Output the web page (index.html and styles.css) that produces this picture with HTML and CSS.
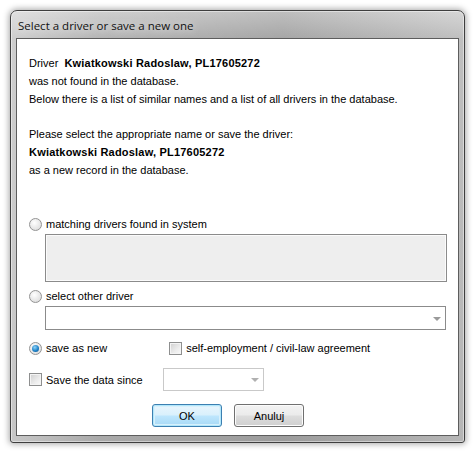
FILE: index.html
```html
<!DOCTYPE html>
<html>
<head>
<meta charset="utf-8">
<link rel="stylesheet" href="styles.css">
</head>
<body>
<div class="window">
  <div class="titlebar">Select a driver or save a new one</div>
  <div class="client">
    <div class="msg">
      <div class="line">Driver&nbsp; <b>Kwiatkowski Radoslaw, PL17605272</b></div>
      <div class="line">was not found in the database.</div>
      <div class="line">Below there is a list of similar names and a list of all drivers in the database.</div>
    </div>
    <div class="msg second">
      <div class="line">Please select the appropriate name or save the driver:</div>
      <div class="line"><b>Kwiatkowski Radoslaw, PL17605272</b></div>
      <div class="line">as a new record in the database.</div>
    </div>

    <div class="row r-matching"><span class="radio"></span><span class="label">matching drivers found in system</span></div>
    <div class="listbox"></div>

    <div class="row r-other"><span class="radio"></span><span class="label">select other driver</span></div>
    <div class="combo"><span class="arrow"></span></div>

    <div class="row r-new">
      <span class="radio checked"></span><span class="label">save as new</span>
      <span class="check self"></span><span class="label">self-employment / civil-law agreement</span>
    </div>

    <div class="row r-since">
      <span class="check"></span><span class="label">Save the data since</span>
      <div class="combo small"><span class="arrow"></span></div>
    </div>

    <div class="buttons">
      <div class="btn default">OK</div>
      <div class="btn">Anuluj</div>
    </div>
  </div>
</div>
</body>
</html>
```
FILE: styles.css
```css
html, body {
  margin: 0;
  padding: 0;
  background: #ffffff;
}
body {
  width: 476px;
  height: 453px;
  overflow: hidden;
  font-family: "Liberation Sans", Arial, sans-serif;
  font-size: 11px;
  color: #000;
}
b {
  letter-spacing: 0.2px;
}
.window {
  box-sizing: border-box;
  margin: 10px 0 0 10px;
  width: 455px;
  height: 433px;
  border: 1px solid #3e3e3e;
  border-radius: 7px 7px 3px 3px;
  background:
    linear-gradient(90deg, rgba(255,255,255,0.35) 0%, rgba(255,255,255,0) 20%, rgba(0,0,0,0.08) 60%, rgba(255,255,255,0.15) 100%),
    linear-gradient(180deg, #cfcfcf 0px, #b4b4b4 28px, #a9a9a9 100%);
  box-shadow: 0 0 6px 1px rgba(0,0,0,0.35), inset 0 0 0 1px rgba(255,255,255,0.45);
  padding: 0 5px 6px 5px;
  display: flex;
  flex-direction: column;
}
.titlebar {
  height: 27px;
  line-height: 29px;
  padding-left: 2px;
  font-family: "Open Sans", "Noto Sans", sans-serif;
  font-size: 11.5px;
  color: #111;
  text-shadow: 0 0 8px rgba(255,255,255,0.9);
}
.client {
  flex: 1;
  background: #fff;
  border: 1px solid #5d5d5d;
  padding: 15px 10px 0 12px;
  display: flex;
  flex-direction: column;
}
.msg .line {
  height: 18px;
  line-height: 18px;
  white-space: nowrap;
}
.msg.second {
  margin-top: 17px;
}
.row {
  display: flex;
  align-items: center;
  height: 18px;
}
.r-matching { margin-top: 36px; }
.r-other { margin-top: 5px; }
.r-new { margin-top: 9px; }
.r-since { margin-top: 11px; height: 23px; }
.label {
  white-space: nowrap;
}
.radio {
  box-sizing: border-box;
  width: 13px;
  height: 13px;
  border-radius: 50%;
  border: 1px solid #939393;
  background: radial-gradient(circle at 40% 35%, #ffffff 0%, #ececec 45%, #d6d6d6 100%);
  margin-right: 4px;
  flex: none;
  position: relative;
}
.radio.checked::after {
  content: "";
  position: absolute;
  left: 2px;
  top: 2px;
  width: 7px;
  height: 7px;
  border-radius: 50%;
  background: radial-gradient(circle at 40% 35%, #8fd3f7 0%, #1f82c8 55%, #0b4f86 100%);
}
.check {
  box-sizing: border-box;
  width: 13px;
  height: 13px;
  border: 1px solid #8e8f8f;
  background: linear-gradient(135deg, #cfcfcf 0%, #ececec 60%, #fafafa 100%);
  box-shadow: inset 0 0 0 1px #f4f4f4;
  margin-right: 4px;
  flex: none;
}
.check.self {
  margin-left: 62px;
}
.listbox {
  box-sizing: border-box;
  margin-top: 1px;
  margin-left: 16px;
  width: 402px;
  height: 48px;
  background: #eeeeee;
  border: 1px solid #8b8b8b;
  box-shadow: inset 0 0 0 1px #fbfbfb;
}
.combo {
  box-sizing: border-box;
  margin-top: 1px;
  margin-left: 16px;
  width: 401px;
  height: 24px;
  background: #fff;
  border: 1px solid #8b8b8b;
  position: relative;
}
.combo.small {
  margin: 0 0 0 20px;
  width: 101px;
  height: 23px;
  border-color: #c9c9c9;
}
.arrow {
  position: absolute;
  right: 4px;
  top: 10px;
  width: 0;
  height: 0;
  border-left: 4px solid transparent;
  border-right: 4px solid transparent;
  border-top: 4px solid #9a9a9a;
}
.combo.small .arrow {
  top: 9px;
  right: 4px;
  border-top-color: #b0b0b0;
}
.buttons {
  display: flex;
  gap: 12px;
  margin-top: 13px;
  margin-left: 123px;
}
.btn {
  box-sizing: border-box;
  width: 70px;
  height: 23px;
  border: 1px solid #707070;
  border-radius: 3px;
  background: linear-gradient(180deg, #f3f3f3 0%, #ebebeb 48%, #dddddd 52%, #cfcfcf 100%);
  box-shadow: inset 0 0 0 1px #fcfcfc;
  display: flex;
  align-items: center;
  justify-content: center;
  font-size: 11px;
}
.btn.default {
  border-color: #3c7fb1;
  background: linear-gradient(180deg, #eaf6fd 0%, #d9f0fc 48%, #bee6fd 52%, #a7d9f5 100%);
  box-shadow: inset 0 0 0 1px #48d0fb44, inset 0 0 0 2px #d8f0fb;
}
```
